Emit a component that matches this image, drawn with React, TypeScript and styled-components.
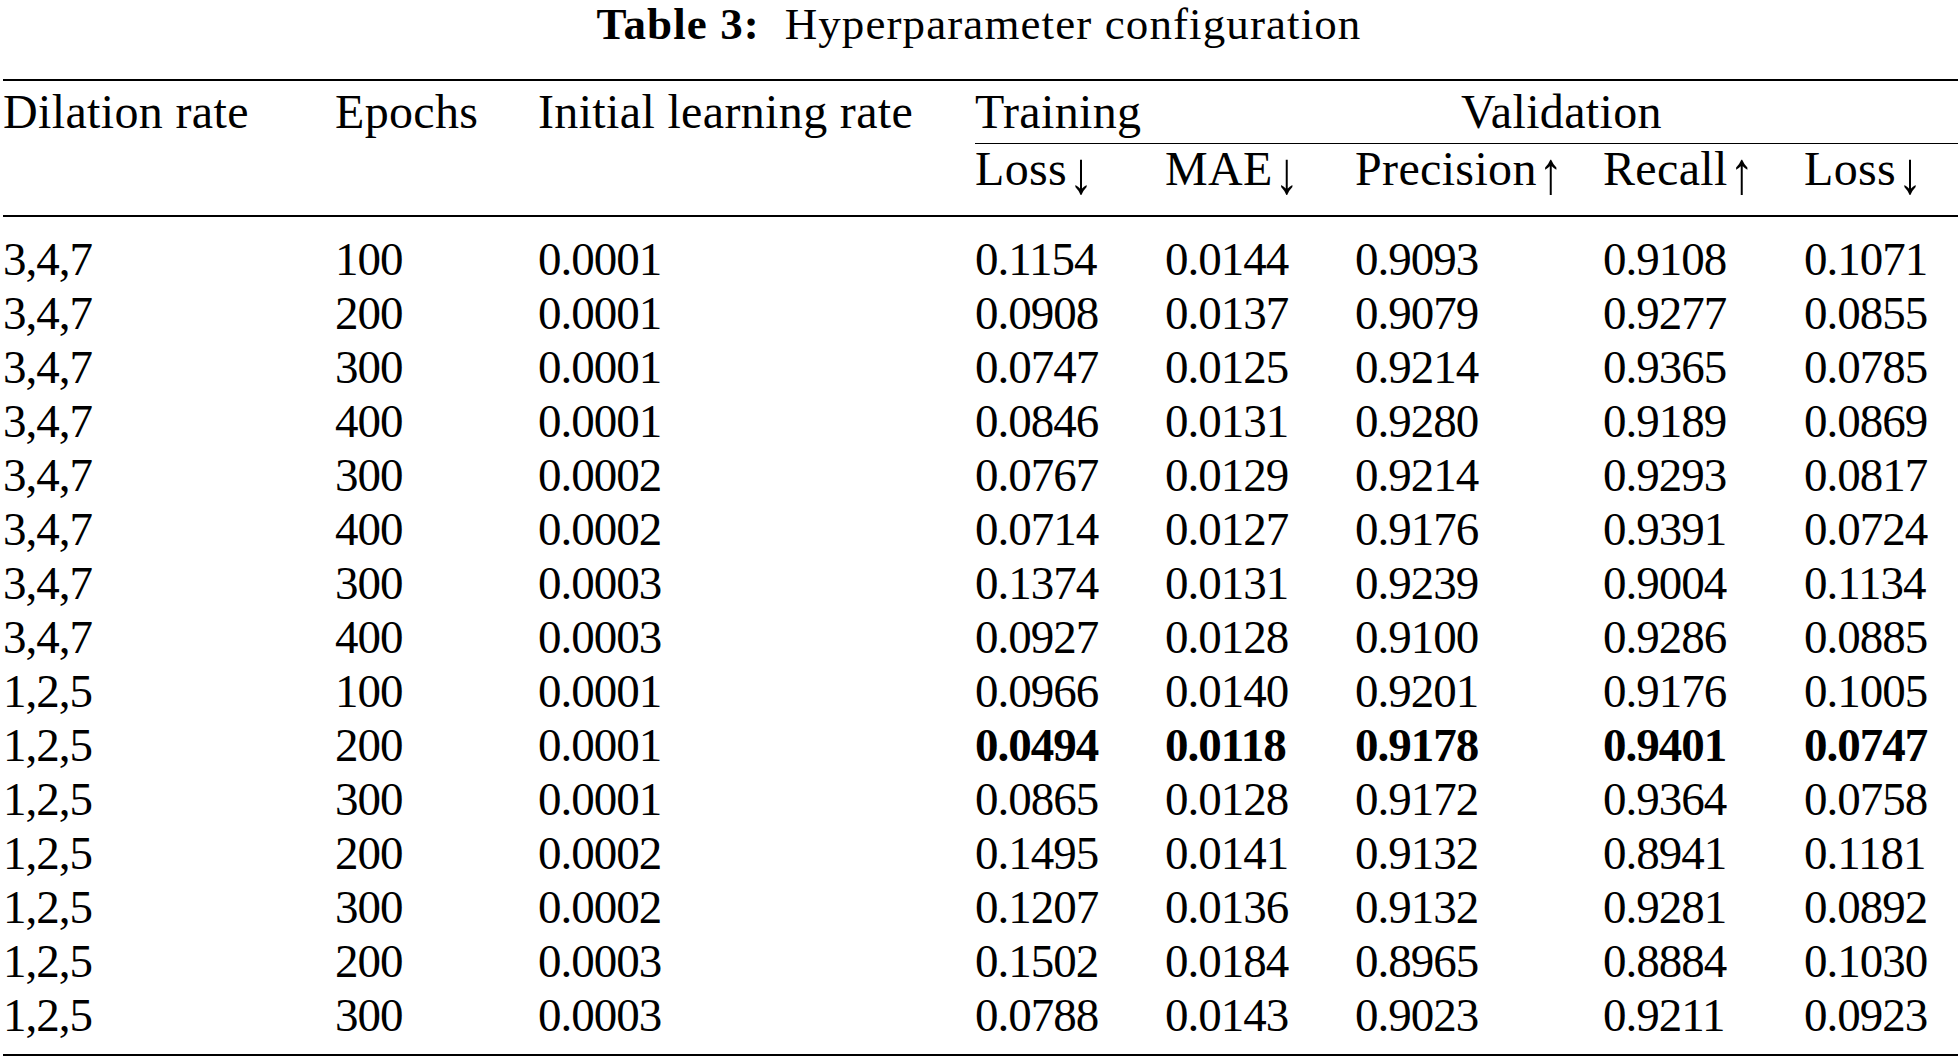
import React from "react";
import styled, { createGlobalStyle } from "styled-components";

const GlobalStyle = createGlobalStyle`
  html, body {
    margin: 0;
    padding: 0;
    background: #ffffff;
  }
  body {
    font-family: "Liberation Serif", "Times New Roman", "DejaVu Serif", serif;
    color: #000000;
  }
`;

const COLS = "332px 203px 437px 190px 190px 248px 201px 1fr";

const Page = styled.div`
  width: 1958px;
`;

const Caption = styled.div`
  font-size: 45px;
  line-height: 48px;
  height: 48px;
  text-align: center;
  letter-spacing: 1.1px;
  white-space: pre;
`;

const CaptionLabel = styled.span`
  font-weight: bold;
`;

const Table = styled.div`
  margin: 31px 0 0 3px;
  width: 1955px;
  border-top: 2px solid #000;
  border-bottom: 2px solid #000;
`;

const Head = styled.div`
  display: grid;
  grid-template-columns: ${COLS};
  grid-template-rows: auto auto;
  border-bottom: 2px solid #000;
  font-size: 48px;
  letter-spacing: 0.35px;
  white-space: nowrap;
`;

const HeadCell = styled.div<{ $col: string; $row: string; $rule?: boolean; $center?: boolean; $sub?: boolean }>`
  grid-column: ${(p) => p.$col};
  grid-row: ${(p) => p.$row};
  text-align: ${(p) => (p.$center ? "center" : "left")};
  line-height: ${(p) => (p.$sub ? "50px" : "54px")};
  padding: ${(p) => (p.$sub ? "0 0 21px 0" : "4px 0 4px 0")};
  border-bottom: ${(p) => (p.$rule ? "1.5px solid #000" : "none")};
`;

const Arrow = styled.span`
  display: inline-block;
  margin-left: 2px;
  transform-origin: 50% 0;
  transform: translateY(-2px) scale(1, 1.24);
`;

const Body = styled.div`
  padding: 15px 0 12px 0;
`;

const Row = styled.div`
  display: grid;
  grid-template-columns: ${COLS};
  font-size: 47px;
  line-height: 54px;
  letter-spacing: -1px;
  white-space: nowrap;
`;

const Cell = styled.div<{ $bold?: boolean }>`
  font-weight: ${(p) => (p.$bold ? "bold" : "normal")};
`;

type Rec = {
  dil: string;
  ep: string;
  lr: string;
  vals: string[];
  best?: boolean;
};

const rows: Rec[] = [
  { dil: "3,4,7", ep: "100", lr: "0.0001", vals: ["0.1154", "0.0144", "0.9093", "0.9108", "0.1071"] },
  { dil: "3,4,7", ep: "200", lr: "0.0001", vals: ["0.0908", "0.0137", "0.9079", "0.9277", "0.0855"] },
  { dil: "3,4,7", ep: "300", lr: "0.0001", vals: ["0.0747", "0.0125", "0.9214", "0.9365", "0.0785"] },
  { dil: "3,4,7", ep: "400", lr: "0.0001", vals: ["0.0846", "0.0131", "0.9280", "0.9189", "0.0869"] },
  { dil: "3,4,7", ep: "300", lr: "0.0002", vals: ["0.0767", "0.0129", "0.9214", "0.9293", "0.0817"] },
  { dil: "3,4,7", ep: "400", lr: "0.0002", vals: ["0.0714", "0.0127", "0.9176", "0.9391", "0.0724"] },
  { dil: "3,4,7", ep: "300", lr: "0.0003", vals: ["0.1374", "0.0131", "0.9239", "0.9004", "0.1134"] },
  { dil: "3,4,7", ep: "400", lr: "0.0003", vals: ["0.0927", "0.0128", "0.9100", "0.9286", "0.0885"] },
  { dil: "1,2,5", ep: "100", lr: "0.0001", vals: ["0.0966", "0.0140", "0.9201", "0.9176", "0.1005"] },
  { dil: "1,2,5", ep: "200", lr: "0.0001", vals: ["0.0494", "0.0118", "0.9178", "0.9401", "0.0747"], best: true },
  { dil: "1,2,5", ep: "300", lr: "0.0001", vals: ["0.0865", "0.0128", "0.9172", "0.9364", "0.0758"] },
  { dil: "1,2,5", ep: "200", lr: "0.0002", vals: ["0.1495", "0.0141", "0.9132", "0.8941", "0.1181"] },
  { dil: "1,2,5", ep: "300", lr: "0.0002", vals: ["0.1207", "0.0136", "0.9132", "0.9281", "0.0892"] },
  { dil: "1,2,5", ep: "200", lr: "0.0003", vals: ["0.1502", "0.0184", "0.8965", "0.8884", "0.1030"] },
  { dil: "1,2,5", ep: "300", lr: "0.0003", vals: ["0.0788", "0.0143", "0.9023", "0.9211", "0.0923"] },
];

export default function App() {
  return (
    <Page>
      <GlobalStyle />
      <Caption>
        <CaptionLabel>Table 3:</CaptionLabel>
        {"  Hyperparameter configuration"}
      </Caption>
      <Table>
        <Head>
          <HeadCell $col="1" $row="1 / 3">Dilation rate</HeadCell>
          <HeadCell $col="2" $row="1 / 3">Epochs</HeadCell>
          <HeadCell $col="3" $row="1 / 3">Initial learning rate</HeadCell>
          <HeadCell $col="4" $row="1" $rule>Training</HeadCell>
          <HeadCell $col="5 / 9" $row="1" $rule $center>Validation</HeadCell>
          <HeadCell $col="4" $row="2" $sub>Loss<Arrow>↓</Arrow></HeadCell>
          <HeadCell $col="5" $row="2" $sub>MAE<Arrow>↓</Arrow></HeadCell>
          <HeadCell $col="6" $row="2" $sub>Precision<Arrow>↑</Arrow></HeadCell>
          <HeadCell $col="7" $row="2" $sub>Recall<Arrow>↑</Arrow></HeadCell>
          <HeadCell $col="8" $row="2" $sub>Loss<Arrow>↓</Arrow></HeadCell>
        </Head>
        <Body>
          {rows.map((r, i) => (
            <Row key={i}>
              <Cell>{r.dil}</Cell>
              <Cell>{r.ep}</Cell>
              <Cell>{r.lr}</Cell>
              {r.vals.map((v, j) => (
                <Cell key={j} $bold={r.best}>
                  {v}
                </Cell>
              ))}
            </Row>
          ))}
        </Body>
      </Table>
    </Page>
  );
}
